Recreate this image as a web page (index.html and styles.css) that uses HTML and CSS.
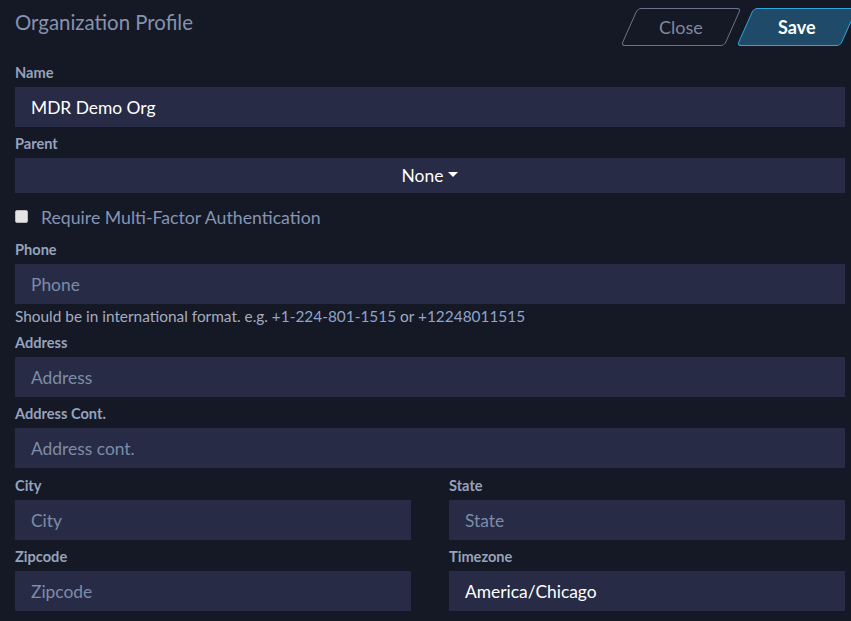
FILE: index.html
```html
<!DOCTYPE html>
<html>
<head>
<meta charset="utf-8">
<link rel="stylesheet" href="styles.css">
</head>
<body>
<div class="page">
  <div class="header">
    <h1 class="title">Organization Profile</h1>
    <div class="actions">
      <button class="btn btn-close"><span>Close</span></button>
      <button class="btn btn-save"><span>Save</span></button>
    </div>
  </div>

  <div class="group">
    <label class="label">Name</label>
    <div class="input value">MDR Demo Org</div>
  </div>

  <div class="group">
    <label class="label">Parent</label>
    <div class="select">None<span class="caret"></span></div>
  </div>

  <div class="check-row">
    <input type="checkbox" class="check">
    <span class="check-label">Require Multi-Factor Authentication</span>
  </div>

  <div class="group">
    <label class="label">Phone</label>
    <div class="input placeholder">Phone</div>
    <div class="help">Should be in international format. e.g. <span class="num">+1-224-801-1515</span> or <span class="num">+12248011515</span></div>
  </div>

  <div class="group">
    <label class="label">Address</label>
    <div class="input placeholder">Address</div>
  </div>

  <div class="group group-last">
    <label class="label">Address Cont.</label>
    <div class="input placeholder">Address cont.</div>
  </div>

  <div class="row">
    <div class="group">
      <label class="label">City</label>
      <div class="input placeholder">City</div>
    </div>
    <div class="group">
      <label class="label">State</label>
      <div class="input placeholder">State</div>
    </div>
  </div>

  <div class="row">
    <div class="group">
      <label class="label">Zipcode</label>
      <div class="input placeholder">Zipcode</div>
    </div>
    <div class="group">
      <label class="label">Timezone</label>
      <div class="input value">America/Chicago</div>
    </div>
  </div>
</div>
</body>
</html>
```

FILE: styles.css
```css
html, body {
  margin: 0;
  padding: 0;
  background: #151825;
  height: 100%;
  overflow: hidden;
}
body {
  font-family: Lato, "Open Sans", sans-serif;
  color: #ffffff;
}
.page {
  padding: 0 6px 0 15px;
}
.header {
  display: flex;
  justify-content: space-between;
  align-items: flex-start;
  padding-top: 8px;
  margin-bottom: 17px;
}
.title {
  margin: 0;
  padding-top: 1px;
  font-size: 20.4px;
  font-weight: 400;
  line-height: 26px;
  color: #8593ad;
}
.actions {
  display: flex;
  gap: 12px;
  margin-right: -4px;
}
.btn {
  width: 104px;
  height: 38px;
  border-radius: 4px;
  transform: skewX(-24deg);
  font-family: inherit;
  font-size: 18px;
  padding: 0;
  cursor: pointer;
}
.btn span {
  display: inline-block;
  transform: skewX(24deg);
}
.btn-close {
  background: transparent;
  border: 1px solid #6c7587;
  color: #7f8aa0;
}
.btn-save {
  background: #1f4b68;
  border: 1px solid #2ea6dd;
  color: #ffffff;
  font-weight: 700;
}
.group {
  margin-bottom: 7px;
}
.group-last {
  margin-bottom: 8px;
}
.label {
  display: block;
  font-size: 14.6px;
  font-weight: 700;
  line-height: 20px;
  color: #96a3bc;
  margin-bottom: 4px;
}
.input {
  height: 40px;
  box-sizing: border-box;
  background: #272b45;
  padding: 0 16px;
  display: flex;
  align-items: center;
  font-size: 17.4px;
}
.value {
  color: #ffffff;
}
.placeholder {
  color: #7e8ca8;
}
.select {
  height: 35px;
  background: #272b45;
  display: flex;
  align-items: center;
  justify-content: center;
  font-size: 17.4px;
  color: #ffffff;
}
.caret {
  display: inline-block;
  margin-left: 5px;
  border-top: 5px solid #ffffff;
  border-left: 5px solid transparent;
  border-right: 5px solid transparent;
  margin-top: -3px;
}
.check-row {
  display: flex;
  align-items: center;
  height: 33px;
  margin-bottom: 7px;
  padding-top: 2px;
  box-sizing: border-box;
}
.check {
  appearance: none;
  -webkit-appearance: none;
  width: 13px;
  height: 13px;
  margin: 0 13px 3px 0;
  background: #e4e4e4;
  border: 1px solid #b8b8b8;
  border-radius: 2px;
  box-sizing: border-box;
}
.check-label {
  font-size: 17.7px;
  color: #8595b4;
}
.help {
  font-size: 15.4px;
  line-height: 20px;
  margin-top: 2px;
  color: #a4adbf;
}
.num {
  color: #8fa5cc;
}
.row {
  display: grid;
  grid-template-columns: 1fr 1fr;
  column-gap: 38px;
}
```
